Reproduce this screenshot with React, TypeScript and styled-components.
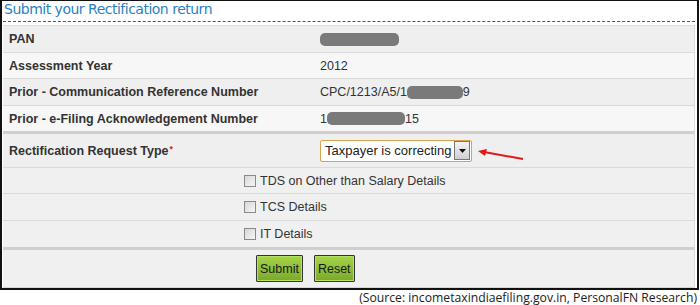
import React from 'react'
import styled, { createGlobalStyle } from 'styled-components'

const GlobalStyle = createGlobalStyle`
    html, body {
        margin: 0;
        padding: 0;
        background: #fff;
    }
    body {
        font-family: 'Liberation Sans', Arial, sans-serif;
    }
`

const Page = styled.div`
    width: 700px;
    height: 305px;
    overflow: hidden;
    background: #fff;
`

const Frame = styled.div`
    box-sizing: border-box;
    width: 699px;
    height: 290px;
    border: 2px solid #111;
    border-top-width: 1px;
    padding: 0 2px 0 1px;
`

const Title = styled.div`
    height: 20px;
    padding-left: 1px;
    font-family: 'DejaVu Sans', sans-serif;
    font-size: 14px;
    line-height: 17px;
    color: #2b7fc2;
    letter-spacing: -0.5px;
    border-bottom: 1px dashed #555;
    margin-bottom: 3px;
`

const Table = styled.div`
    border-top: 1px solid #dedede;
    border-right: 1px solid #dcdcdc;
`

const Row = styled.div<{ shade: 'dark' | 'light'; h: number; thick?: boolean }>`
    display: grid;
    grid-template-columns: 310px 1fr;
    align-items: center;
    box-sizing: border-box;
    height: ${({ h }) => h}px;
    background: ${({ shade }) => (shade === 'dark' ? '#efefef' : '#f7f7f7')};
    border-bottom: ${({ thick }) => (thick ? '3px solid #cfcfcf' : '1px solid #dadada')};
`

const Label = styled.div`
    padding-left: 6px;
    font-size: 12.5px;
    font-weight: bold;
    color: #333;
`

const Required = styled.span`
    color: #e02020;
    font-size: 9px;
    vertical-align: top;
    margin-left: 1px;
`

const Value = styled.div`
    padding-left: 7px;
    display: flex;
    align-items: center;
    font-size: 12.5px;
    color: #333;
`

const Blur = styled.span<{ w: number }>`
    display: inline-block;
    width: ${({ w }) => w}px;
    height: 13px;
    border-radius: 5px;
    background: #7a7a7a;
`

const SelectBox = styled.div`
    display: flex;
    align-items: center;
    box-sizing: border-box;
    width: 152px;
    height: 22px;
    border: 1px solid #d9a54a;
    border-radius: 2px;
    background: #fff;
    padding: 0 1px 0 4px;
    font-size: 13px;
    color: #222;
`

const SelectText = styled.span`
    flex: 1;
    white-space: nowrap;
`

const DropButton = styled.span`
    display: flex;
    align-items: center;
    justify-content: center;
    width: 14px;
    height: 17px;
    border: 1px solid #777;
    background: linear-gradient(#f4f4f4, #cfcfcf);
`

const ArrowIcon = styled.svg`
    margin-left: 6px;
    margin-top: 8px;
`

const CheckRow = styled.div<{ h: number; thick?: boolean }>`
    display: flex;
    align-items: center;
    box-sizing: border-box;
    height: ${({ h }) => h}px;
    padding-left: 241px;
    background: #f0f0f0;
    border-bottom: ${({ thick }) => (thick ? '3px solid #cfcfcf' : '1px solid #dadada')};
    font-size: 12.5px;
    color: #333;
`

const Check = styled.span`
    box-sizing: border-box;
    width: 12px;
    height: 12px;
    margin-right: 4px;
    border: 1px solid #8a8a8a;
    background: linear-gradient(135deg, #d8d8d8, #f6f6f6);
`

const ButtonRow = styled.div`
    display: flex;
    align-items: center;
    gap: 11px;
    box-sizing: border-box;
    height: 38px;
    padding-left: 253px;
    background: #f0f0f0;
    border-bottom: 1px solid #d6d6d6;
`

const GreenButton = styled.button`
    height: 27px;
    padding: 0 3px;
    border: 1px solid #333;
    border-radius: 1px;
    background: linear-gradient(#a6d64a, #7aa82a);
    font-family: 'Liberation Sans', Arial, sans-serif;
    font-size: 12.5px;
    color: #1a1a1a;
    box-shadow: inset 0 0 0 1px #b8e060;
`

const Source = styled.div`
    text-align: right;
    padding-right: 3px;
    font-family: 'Open Sans', sans-serif;
    font-size: 12.2px;
    color: #222;
    line-height: 15px;
`

const App: React.FC = () => {
  return (
    <Page>
      <GlobalStyle />
      <Frame>
        <Title>Submit your Rectification return</Title>
        <Table>
          <Row shade="dark" h={27}>
            <Label>PAN</Label>
            <Value>
              <Blur w={79} />
            </Value>
          </Row>
          <Row shade="light" h={26}>
            <Label>Assessment Year</Label>
            <Value>2012</Value>
          </Row>
          <Row shade="dark" h={27}>
            <Label>Prior - Communication Reference Number</Label>
            <Value>
              CPC/1213/A5/1
              <Blur w={56} />9
            </Value>
          </Row>
          <Row shade="light" h={28} thick>
            <Label>Prior - e-Filing Acknowledgement Number</Label>
            <Value>
              1<Blur w={78} />15
            </Value>
          </Row>
          <Row shade="dark" h={34}>
            <Label>
              Rectification Request Type<Required>*</Required>
            </Label>
            <Value>
              <SelectBox>
                <SelectText>Taxpayer is correcting</SelectText>
                <DropButton>
                  <svg width="7" height="4" viewBox="0 0 7 4">
                    <path d="M0 0 H7 L3.5 4 Z" fill="#111" />
                  </svg>
                </DropButton>
              </SelectBox>
              <ArrowIcon width="46" height="12" viewBox="0 0 46 12">
                <path d="M6 3 L45 10" stroke="#e01818" strokeWidth="2" fill="none" />
                <path d="M0 2 L9 0 L7 7 Z" fill="#e01818" />
              </ArrowIcon>
            </Value>
          </Row>
          <CheckRow h={26}>
            <Check />
            TDS on Other than Salary Details
          </CheckRow>
          <CheckRow h={27}>
            <Check />
            TCS Details
          </CheckRow>
          <CheckRow h={29} thick>
            <Check />
            IT Details
          </CheckRow>
          <ButtonRow>
            <GreenButton>Submit</GreenButton>
            <GreenButton>Reset</GreenButton>
          </ButtonRow>
        </Table>
      </Frame>
      <Source>(Source: incometaxindiaefiling.gov.in, PersonalFN Research)</Source>
    </Page>
  )
}

export default App
